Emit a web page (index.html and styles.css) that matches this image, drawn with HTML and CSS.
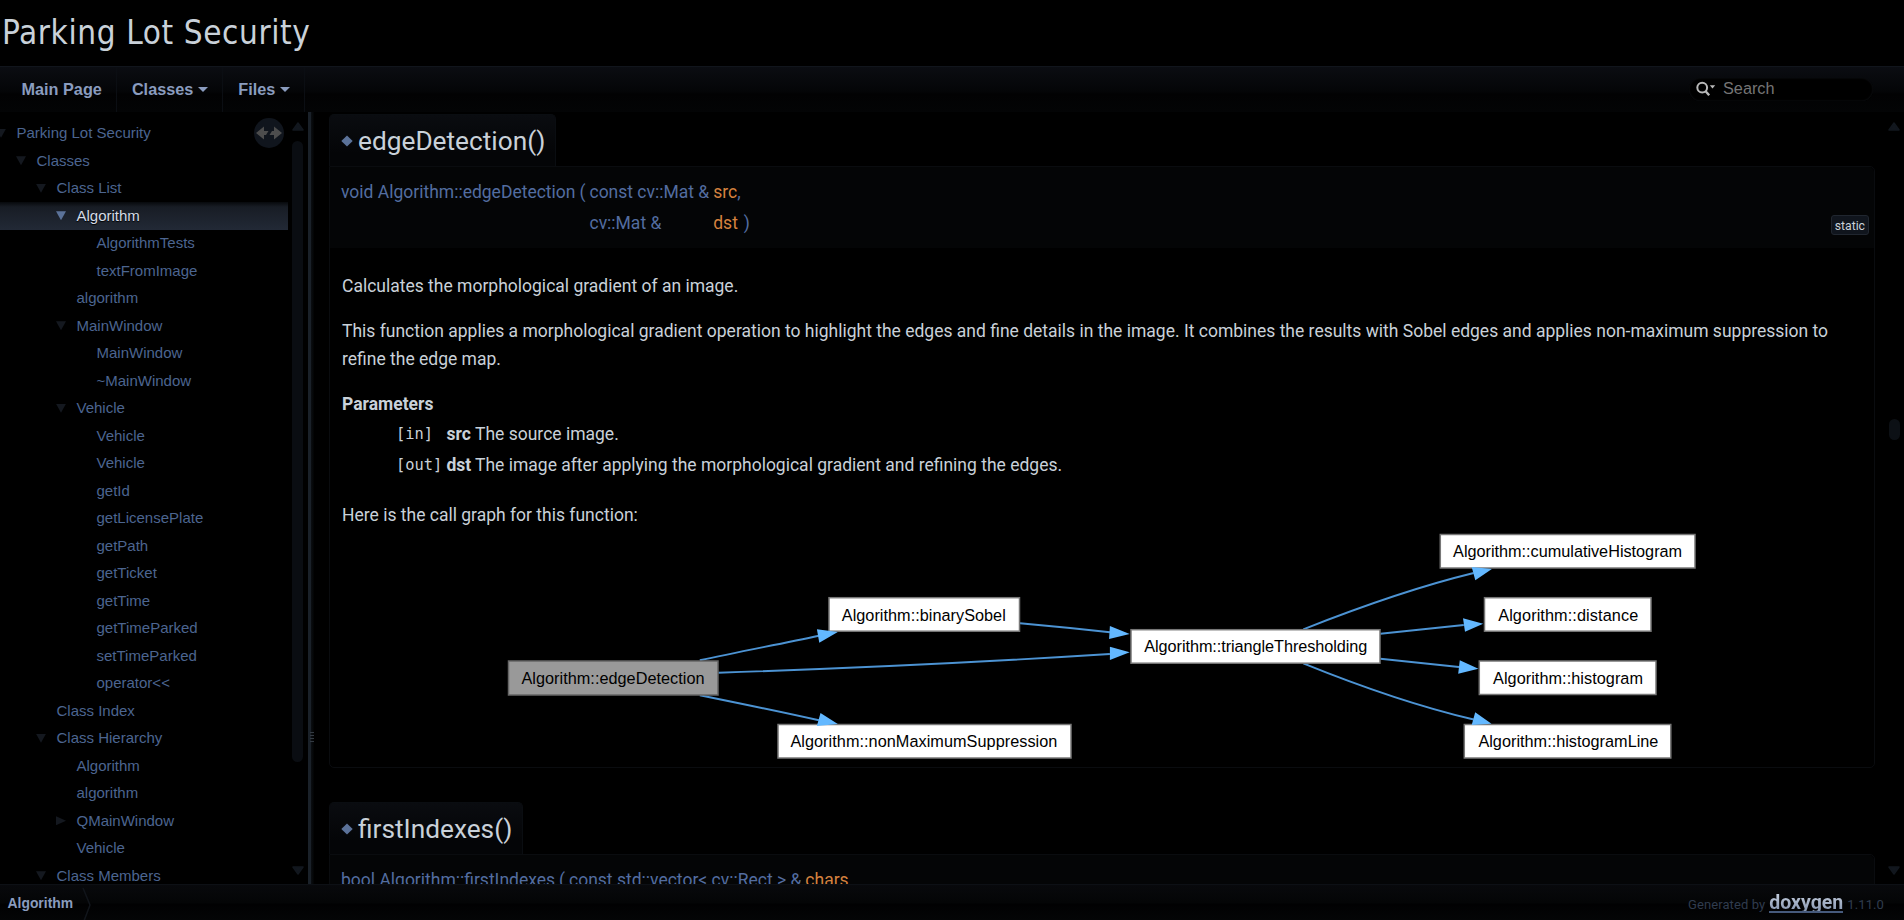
FILE: index.html
```
<!DOCTYPE html>
<html lang="en">
<head>
<meta charset="utf-8">
<title>Parking Lot Security: Algorithm Class Reference</title>
<link rel="stylesheet" href="styles.css">
</head>
<body>
<header class="titlearea">Parking Lot Security</header>
<nav class="menubar">
  <a class="tab">Main Page</a>
  <a class="tab">Classes<i class="caret"></i></a>
  <a class="tab">Files<i class="caret"></i></a>
  <div class="search">
    <svg width="20" height="16" viewBox="0 0 20 16" fill="none" stroke="#b9b9b9"><circle cx="6.2" cy="6.6" r="4.9" stroke-width="2"/><path d="M9.6 10.2l3.600 4" stroke-width="2.400"/><path d="M13.800 4.200h5.400l-2.700 3.400z" fill="#b9b9b9" stroke="none"/></svg>
    <span>Search</span>
  </div>
</nav>
<div class="middle">
  <aside class="side">
    <ul class="tree" id="tree">
      <li class="l0 open"><span>Parking Lot Security</span></li>
      <li class="l1 open"><span>Classes</span></li>
      <li class="l2 open"><span>Class List</span></li>
      <li class="l3 open selected"><span>Algorithm</span></li>
      <li class="l4"><span>AlgorithmTests</span></li>
      <li class="l4"><span>textFromImage</span></li>
      <li class="l3"><span>algorithm</span></li>
      <li class="l3 open"><span>MainWindow</span></li>
      <li class="l4"><span>MainWindow</span></li>
      <li class="l4"><span>~MainWindow</span></li>
      <li class="l3 open"><span>Vehicle</span></li>
      <li class="l4"><span>Vehicle</span></li>
      <li class="l4"><span>Vehicle</span></li>
      <li class="l4"><span>getId</span></li>
      <li class="l4"><span>getLicensePlate</span></li>
      <li class="l4"><span>getPath</span></li>
      <li class="l4"><span>getTicket</span></li>
      <li class="l4"><span>getTime</span></li>
      <li class="l4"><span>getTimeParked</span></li>
      <li class="l4"><span>setTimeParked</span></li>
      <li class="l4"><span>operator&lt;&lt;</span></li>
      <li class="l2"><span>Class Index</span></li>
      <li class="l2 open"><span>Class Hierarchy</span></li>
      <li class="l3"><span>Algorithm</span></li>
      <li class="l3"><span>algorithm</span></li>
      <li class="l3 closed"><span>QMainWindow</span></li>
      <li class="l3"><span>Vehicle</span></li>
      <li class="l2 open"><span>Class Members</span></li>
    </ul>
    <svg class="sync" width="30" height="30" viewBox="0 0 30 30"><circle cx="15" cy="15" r="15" fill="#10151d"/><path d="M2 15l8-6.500v4.500h4.500l-2.500 4h-2v4.500zM28 15l-8-6.500v4.500h-2l-2.500 4h4.500v4.500z" fill="#4d4d4d"/></svg>
    <div class="scroll">
      <svg width="12" height="9" viewBox="0 0 12 9"><path d="M6 1L11 8H1z" class="arrow"/></svg>
      <i class="thumb"></i>
      <svg width="12" height="9" viewBox="0 0 12 9"><path d="M6 8L1 1H11z" class="arrow"/></svg>
    </div>
  </aside>
  <div class="splitter"><i class="grip"></i></div>
  <main class="content">
    <h2 class="memtitle"><svg width="12" height="12" viewBox="0 0 12 12"><path d="M6 .5L11.700 6 6 11.500.3 6z" fill="#5b7299"/></svg>edgeDetection()</h2>
    <section class="memitem first">
      <div class="memproto">
        <div class="proto">
          <span>void Algorithm::edgeDetection</span><span>(</span><span>const cv::Mat &amp;</span><span><em>src</em>,</span><span></span>
          <span></span><span></span><span>cv::Mat &amp;</span><span><em>dst</em></span><span class="close">)</span>
        </div>
        <span class="mlabel">static</span>
      </div>
      <div class="memdoc">
        <p>Calculates the morphological gradient of an image.</p>
        <p>This function applies a morphological gradient operation to highlight the edges and fine details in the image. It combines the results with Sobel edges and applies non-maximum suppression to refine the edge map.</p>
        <h3 class="params">Parameters</h3>
        <div class="paramlist">
          <code>[in]</code><b>src</b><span>The source image.</span>
          <code>[out]</code><b>dst</b><span>The image after applying the morphological gradient and refining the edges.</span>
        </div>
        <p class="graphtext">Here is the call graph for this function:</p>
        <svg class="graph" width="1192" height="228" viewBox="506 532 1192 228">
          <g class="edge">
            <path d="M699.800 660.300C738 652 780 644 818.900 635.700M718.400 672.700C860 668 985 662 1109.900 654M1020 623.300C1050 626 1080 629 1109.900 632.300M699.800 695.200C738 703 780 711.500 818.900 720.300M1303.300 629.300C1342 614 1412 588 1473.700 573M1380.400 633.700L1463.800 625M1380.400 658.700L1459 667M1303.300 663.300C1342 679 1412 705 1473.700 719.500"/>
          </g>
          <g class="node">
            <rect x="508.500" y="661" width="209.500" height="34" class="current"/>
            <rect x="829" y="597.700" width="190.500" height="33.500"/>
            <rect x="778" y="724.500" width="293" height="33.500"/>
            <rect x="1131" y="629.700" width="249" height="33.500"/>
            <rect x="1440.300" y="534.500" width="254.700" height="33.500"/>
            <rect x="1484.500" y="597.700" width="166.500" height="33.500"/>
            <rect x="1479.300" y="661" width="176.700" height="33.500"/>
            <rect x="1464.300" y="724.500" width="206.500" height="33.500"/>
          </g>
          <g class="head">
            <path d="M816.900 629.300L837.800 632 819.300 642.700zM1109.900 646.700L1129.700 652.300 1109.900 660zM1109.900 626L1129.700 634 1109.100 639zM820.500 713L837.800 724 816.900 726zM1471.700 567L1491.900 569 1475.300 580.300zM1463 618.300L1483.200 623.700 1465 631.700zM1459.800 660.300L1478.400 668.700 1458.200 673.700zM1475.200 712.300L1491.500 723.700 1471.700 725z"/>
          </g>
          <g class="label">
            <text x="521.500" y="684.300" textLength="183">Algorithm::edgeDetection</text>
            <text x="841.800" y="620.700" textLength="164">Algorithm::binarySobel</text>
            <text x="790.400" y="747" textLength="267">Algorithm::nonMaximumSuppression</text>
            <text x="1144.300" y="652" textLength="223">Algorithm::triangleThresholding</text>
            <text x="1453.100" y="557" textLength="229">Algorithm::cumulativeHistogram</text>
            <text x="1498.200" y="620.700" textLength="140">Algorithm::distance</text>
            <text x="1493" y="684" textLength="150">Algorithm::histogram</text>
            <text x="1478.400" y="747" textLength="180">Algorithm::histogramLine</text>
          </g>
        </svg>
      </div>
    </section>
    <h2 class="memtitle"><svg width="12" height="12" viewBox="0 0 12 12"><path d="M6 .5L11.700 6 6 11.500.3 6z" fill="#5b7299"/></svg>firstIndexes()</h2>
    <section class="memitem">
      <div class="memproto">
        <div class="proto">
          <span>bool Algorithm::firstIndexes</span><span>(</span><span>const std::vector&lt; cv::Rect &gt; &amp;</span><span><em>chars</em></span><span></span>
        </div>
      </div>
    </section>
  </main>
  <div class="scroll page">
    <svg width="12" height="9" viewBox="0 0 12 9"><path d="M6 1L11 8H1z" class="arrow"/></svg>
    <i class="thumb"></i>
    <svg width="12" height="9" viewBox="0 0 12 9"><path d="M6 8L1 1H11z" class="arrow"/></svg>
  </div>
</div>
<footer class="navpath">
  <b>Algorithm</b>
  <svg class="chev" width="10" height="36" viewBox="0 0 10 36" fill="none" stroke="#11151b" stroke-width="1.500"><path d="M1 3l7 17-6 16"/></svg>
  <span class="generated">Generated by <a class="logo">doxygen</a> 1.11.0</span>
</footer>
</body>
</html>
```
FILE: styles.css
```
* { box-sizing: border-box; }
body { margin: 0; height: 920px; overflow: hidden; background: #000; color: #c9d1d9; display: flex; flex-direction: column; font: 17.5px/28px Roboto, "Liberation Sans", sans-serif; }
.titlearea { height: 66px; padding: 1px 0 1px 2px; font: 33px/64px "DejaVu Sans Condensed", "DejaVu Sans", sans-serif; letter-spacing: .6px; flex: none; }
.menubar { height: 46px; flex: none; display: flex; border-top: 1px solid #11151c; background: linear-gradient(#0b0d12, #040507 55%, #020203 60%, #030405); padding-left: 6.500px; font: bold 16.250px/45px "Liberation Sans", sans-serif; color: #8a9cbf; }
.tab { padding: 0 14px 0 15px; border-right: 1px solid #0b0e13; display: flex; align-items: center; white-space: nowrap; }
.caret { border: 5px solid transparent; border-top-color: #8a9cbf; border-bottom: 0; margin-left: 5px; }
.search { margin: 11px 31px 0 auto; width: 184px; height: 23px; border-radius: 12px; background: #000; box-shadow: inset 0 0 2px #16191e; display: flex; align-items: center; gap: 7px; padding: 0 0 3px 7px; font: 16.250px/20px "Liberation Sans", sans-serif; color: #757575; }
.search svg { margin-top: 1px; }
.middle { flex: 1; min-height: 0; display: flex; overflow: hidden; }
.side { width: 308px; flex: none; position: relative; display: flex; overflow: hidden; }
.tree { list-style: none; margin: 0; padding: 7.500px 0 0; width: 288px; flex: none; font: 15px/27.500px "Liberation Sans", sans-serif; color: #4c6590; }
.tree li { height: 27.500px; display: flex; align-items: center; white-space: nowrap; }
.tree li span { margin-top: -1px; }
.tree li::before { content: ""; width: 10px; height: 9px; margin-right: 10.500px; flex: none; }
.tree .open::before { background: #14181f; clip-path: polygon(0 0, 100% 0, 50% 100%); }
.tree .closed::before { background: #14181f; clip-path: polygon(0 0, 100% 50%, 0 100%); }
.l0 { margin-left: -4px; }
.l1 { padding-left: 16px; }
.l2 { padding-left: 36px; }
.l3 { padding-left: 56px; }
.l4 { padding-left: 76px; }
.tree .selected { color: #d5dce6; background: linear-gradient(#07090c, #181d25 18%, #222936); text-shadow: 0 1px 1px #000; }
.tree .selected::before { background: #5b7299; }
.sync { position: absolute; left: 254px; top: 6px; }
.scroll { width: 20px; display: flex; flex-direction: column; align-items: center; padding: 10px 1px 9px 0; flex: none; }
.scroll .arrow { fill: #12171e; stroke: #12171e; stroke-width: 1.500; stroke-linejoin: round; }
.scroll svg { flex: none; }
.side .thumb { width: 11px; height: 621px; margin: 10px 0 auto; border-radius: 6px; background: #0a0d12; }
.splitter { width: 6px; flex: none; background: linear-gradient(90deg, #1a2129 0 50%, #0b0e12 50%, #020303); }
.grip { display: block; width: 4px; height: 10px; margin: 620px 0 0 2px; background: repeating-linear-gradient(#333a42 0 1px, transparent 1px 3px); }
.content { flex: 1; min-width: 0; padding: 2px 0 0 15px; overflow: hidden; }
.memtitle { margin: 0; width: max-content; height: 52px; padding: 0 10px 0 11px; border: 1px solid #0a0d11; border-bottom: 0; border-radius: 5px 5px 0 0; background: linear-gradient(#0a0c10, #040507 75%); font: 26.250px/52px Roboto, sans-serif; display: flex; align-items: center; gap: 5px; }
.memitem { width: 1546px; border: 1px solid #0a0c0f; border-radius: 0 5px 5px 5px; background: #000; }
.first { height: 602px; margin-bottom: 34px; }
.memproto { display: flex; justify-content: space-between; height: 81px; padding: 10px 5px 0 11px; background: #040506; color: #536da0; border-radius: 0 5px 0 0; }
.proto { display: grid; grid-template-columns: repeat(5, max-content); grid-auto-rows: 31px; line-height: 31px; column-gap: 4px; align-content: start; white-space: pre; }
.proto em { font-style: normal; color: #d6823f; }
.close { margin-left: -1px; }
.mlabel { align-self: flex-start; margin-top: 38px; height: 20px; padding: 0 3px; border: 1px solid #20262f; border-radius: 3px; background: #10151d; color: #c9d1d9; font: 12.200px/20px Roboto, sans-serif; }
.memdoc { padding: 24px 12px 0 12px; }
.memdoc p { margin: 0 0 17px; width: 1500px; }
.params { margin: 0; font: bold 17.500px/28px Roboto, sans-serif; }
.paramlist { display: grid; grid-template-columns: 50.500px 28.500px auto; grid-auto-rows: 31.500px; align-items: center; padding-left: 54px; margin-bottom: 20px; white-space: nowrap; }
.paramlist code { font: 15.400px "DejaVu Sans Mono", monospace; }
.memdoc .graphtext { margin-bottom: 3px; }
.graph { display: block; margin: 0 auto 0 164px; }
.edge { fill: none; stroke: #4c93d3; stroke-width: 1.900; }
.head { fill: #63b8ff; }
.node { fill: #fff; stroke: #777; stroke-width: 1.500; }
.current { fill: #999; stroke: #666; }
.label { font: 16.250px "Liberation Sans", sans-serif; fill: #000; }
.page .thumb { width: 11px; height: 21px; margin: 288px 0 auto; border-radius: 6px; background: #0c1015; }
.page { padding-right: 0; }
.navpath { height: 36px; flex: none; display: flex; align-items: center; border-top: 1px solid #0d1015; background: linear-gradient(#08090c, #040506 50%, #010102 55%, #040506); padding: 2px 20px 0 7.500px; font: 13.900px "Liberation Sans", sans-serif; color: #8a9cbf; }
.navpath b { margin-top: -1px; }
.chev { margin: -2px 0 0 9px; }
.generated { margin-left: auto; display: flex; align-items: baseline; gap: 4px; font: 13px Roboto, sans-serif; letter-spacing: .1px; color: #303c4e; }
.logo { font: bold 19.500px/17px Roboto, sans-serif; letter-spacing: 0; color: transparent; background: linear-gradient(#c3cddd, #8796b0) text; border-bottom: 2px solid #465a7c; }
```
